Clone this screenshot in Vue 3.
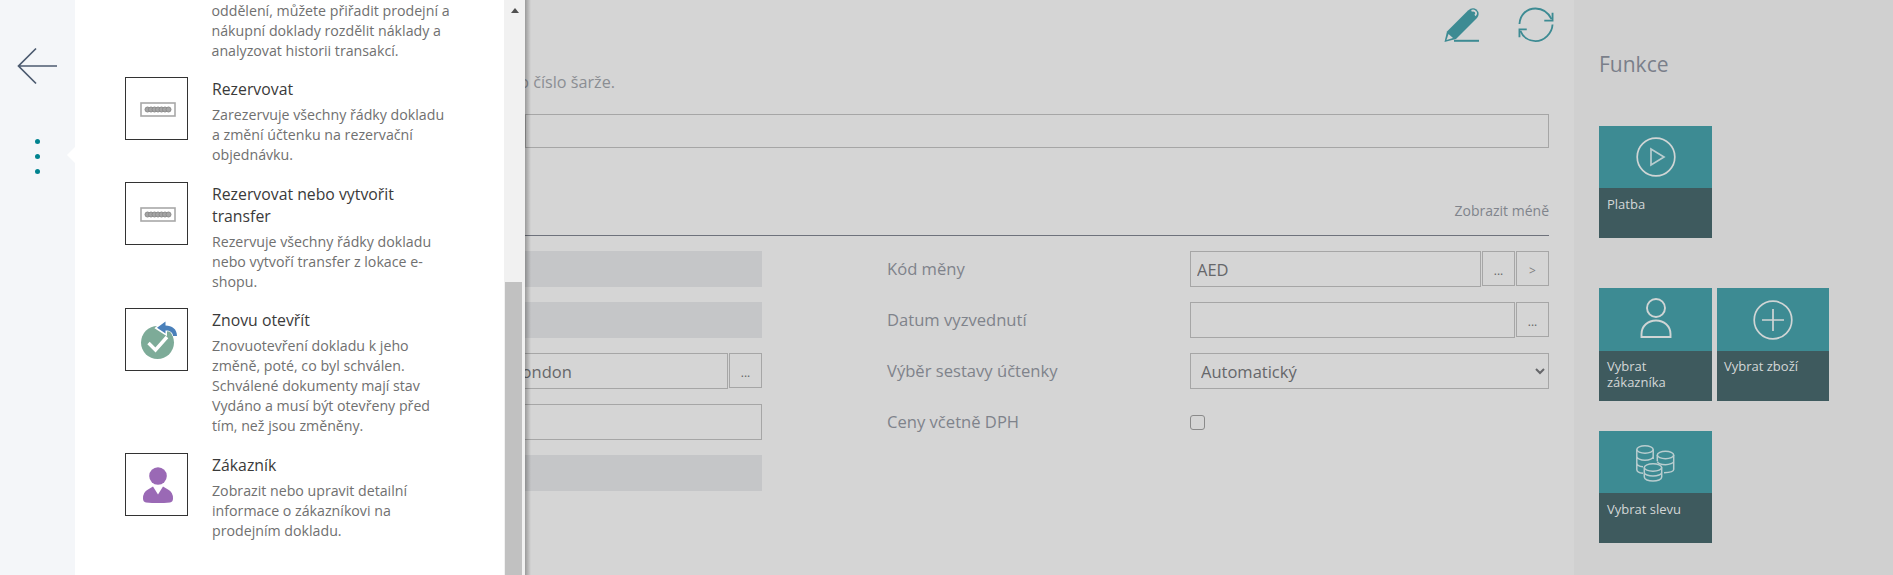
<script setup>
const lead = 'oddělení, můžete přiřadit prodejní a\nnákupní doklady rozdělit náklady a\nanalyzovat historii transakcí.'
const items = [
  { cls: 'i1', icon: 'box', title: 'Rezervovat', desc: 'Zarezervuje všechny řádky dokladu\na změní účtenku na rezervační\nobjednávku.' },
  { cls: 'i2', icon: 'box', title: 'Rezervovat nebo vytvořit\ntransfer', desc: 'Rezervuje všechny řádky dokladu\nnebo vytvoří transfer z lokace e-\nshopu.' },
  { cls: 'i3', icon: 'reopen', title: 'Znovu otevřít', desc: 'Znovuotevření dokladu k jeho\nzměně, poté, co byl schválen.\nSchválené dokumenty mají stav\nVydáno a musí být otevřeny před\ntím, než jsou změněny.' },
  { cls: 'i4', icon: 'customer', title: 'Zákazník', desc: 'Zobrazit nebo upravit detailní\ninformace o zákazníkovi na\nprodejním dokladu.' }
]
const dots = [7, 10.5, 14, 17.5, 21, 24.5, 28]
</script>

<template>
  <div class="page">
    <nav class="nav">
      <svg class="back" width="42" height="38" viewBox="0 0 42 38">
        <path d="M20 1.5 2.5 19 20 36.5M2.5 19H41" fill="none" stroke="#4c5b70" stroke-width="1.7" />
      </svg>
      <div class="dots"><i></i><i></i><i></i></div>
    </nav>

    <aside class="panel">
      <div class="list">
        <p class="desc lead">{{ lead }}</p>
        <div v-for="item in items" :key="item.title" class="item" :class="item.cls">
          <div class="ibox">
            <svg v-if="item.icon === 'box'" class="ic-box" width="36" height="15" viewBox="0 0 36 15">
              <rect x="1" y="1" width="34" height="13" fill="#fff" stroke="#a8a8a8" stroke-width="1.6" />
              <circle v-for="d in dots" :key="d" :cx="d + .5" cy="7.5" r="2.500" fill="#a4a4a4" stroke="#8c8c8c" stroke-width="1" />
            </svg>
            <svg v-else-if="item.icon === 'reopen'" class="ic-reopen" width="37" height="38" viewBox="0 0 37 38">
              <circle cx="16.5" cy="21.5" r="16.5" fill="#7dab98" />
              <path d="M7.5 22 14.5 29 26 16" fill="none" stroke="#fff" stroke-width="3.4" />
              <path d="M16 7 24.5 0v12.500Z" fill="#fff" stroke="#fff" stroke-width="3" />
              <path d="M22 7c8-1 13 1 13 8" fill="none" stroke="#fff" stroke-width="7" />
              <path d="M16 6.800 24.500 .5v4c6.500 0 11.500 3.500 11.500 10.500h-4c0-3.500-3-5.500-7.500-5.500v3Z" fill="#4a80ba" />
            </svg>
            <svg v-else class="ic-cust" width="30" height="36" viewBox="0 0 30 36">
              <circle cx="15" cy="9" r="8.800" fill="#9a69b5" />
              <path d="M3 35.500Q0 35 0 31.500 0 25 5 22.500L10 19.500 15 27.500 20 19.500 25 22.500Q30 25 30 31.500 30 35 27 35.500 15 36.500 3 35.500Z" fill="#9a69b5" />
            </svg>
          </div>
          <div class="itext">
            <h3 class="title">{{ item.title }}</h3>
            <p class="desc">{{ item.desc }}</p>
          </div>
        </div>
      </div>
      <div class="scroll">
        <span class="arrow"></span>
        <span class="thumb"></span>
      </div>
    </aside>

    <main class="main">
      <div class="toolbar">
        <svg width="36" height="36" viewBox="0 0 36 36">
          <path d="M.5 35 3 24.500 24 3.500Q28.500-.5 32.500 2.500 36.500 6.500 33 11L12 32Z" fill="#3d8b93" />
          <path d="M2.500 33 4.500 27 9 31Z" fill="#d5d5d5" />
          <path d="M27.500 3.800Q30 2.800 31.800 5 32.800 7 31 8.500" fill="none" stroke="#d5d5d5" stroke-width="1.800" />
          <path d="M10 33.800H35" stroke="#3d8b93" stroke-width="2" />
        </svg>
        <svg width="36" height="36" viewBox="0 0 37 37">
          <path d="M1.500 17.500C2 8 9 1.500 18 1.500 25 1.500 31 5.500 34.500 12.500M2.500 24.500C5 31 11 35 18 35 27 35 35 27 35.500 18" fill="none" stroke="#3d8b93" stroke-width="1.900" />
          <path d="M35.500 6V14H27M9 23H1.500V31" fill="none" stroke="#3d8b93" stroke-width="1.900" />
        </svg>
      </div>
      <div class="hint-row"><span class="hint">Zadejte sériové číslo nebo číslo šarže.</span></div>
      <input class="field scan" readonly value="" />
      <div class="section-head"><span>Zobrazit méně</span></div>
      <div class="form">
        <div class="col-left">
          <div class="ro"></div>
          <div class="ro"></div>
          <div class="with-btn">
            <input class="field grow clip-l" readonly value="London" />
            <button class="btn">...</button>
          </div>
          <input class="field clip" readonly value="" />
          <div class="ro"></div>
        </div>
        <div class="col-right">
          <label class="lbl">Kód měny</label>
          <div class="with-btn">
            <input class="field grow" readonly value="AED" />
            <button class="btn">...</button>
            <button class="btn gt">&gt;</button>
          </div>
          <label class="lbl">Datum vyzvednutí</label>
          <div class="with-btn">
            <input class="field grow" readonly value="" />
            <button class="btn">...</button>
          </div>
          <label class="lbl">Výběr sestavy účtenky</label>
          <select class="field sel"><option>Automatický</option></select>
          <label class="lbl">Ceny včetně DPH</label>
          <div class="chk"><input type="checkbox" /></div>
        </div>
      </div>
    </main>

    <aside class="side">
      <h2 class="side-title">Funkce</h2>
      <div class="tiles r1">
        <div class="tile">
          <div class="tile-top">
            <svg width="40" height="40" viewBox="0 0 40 40">
              <circle cx="20" cy="20" r="18.800" fill="none" stroke="#d0d5d5" stroke-width="1.700" />
              <path d="M15 12V28L28 20Z" fill="none" stroke="#b9cdcf" stroke-width="1.700" />
            </svg>
          </div>
          <div class="tile-label">Platba</div>
        </div>
      </div>
      <div class="tiles r2">
        <div class="tile">
          <div class="tile-top">
            <svg class="ic-person" width="32" height="41" viewBox="0 0 32 41">
              <circle cx="16" cy="10" r="9" fill="none" stroke="#d0d5d5" stroke-width="1.900" />
              <path d="M1.500 39V36C1.500 28 8 22.500 16 22.500S30.500 28 30.500 36V39Z" fill="none" stroke="#d0d5d5" stroke-width="1.900" />
            </svg>
          </div>
          <div class="tile-label">Vybrat zákazníka</div>
        </div>
        <div class="tile t2">
          <div class="tile-top">
            <svg width="40" height="40" viewBox="0 0 40 40">
              <circle cx="20" cy="20" r="18.800" fill="none" stroke="#d0d5d5" stroke-width="1.700" />
              <path d="M20 9V31M9 20H31" stroke="#d0d5d5" stroke-width="1.700" />
            </svg>
          </div>
          <div class="tile-label">Vybrat zboží</div>
        </div>
      </div>
      <div class="tiles r3">
        <div class="tile">
          <div class="tile-top">
            <svg class="ic-coins" width="39" height="37" viewBox="0 0 39 37" fill="none" stroke="#b9cdcf" stroke-width="1.500">
              <ellipse cx="9" cy="4.500" rx="8.200" ry="3.700" />
              <path d="M.8 4.500V24.500C.8 26.500 3.500 28 7 28.300M17.200 4.500V14M.8 11.500C.8 13.500 4.500 15.200 9 15.200S17.200 13.500 17.200 11.500M.8 18C.8 20 3.500 21.500 7 21.800" />
              <ellipse cx="29.500" cy="10" rx="8.200" ry="3.700" />
              <path d="M21.300 10V16M37.700 10V24.500C37.700 26.500 34.500 27.500 28 27.800M21.300 16.500C22 18.500 25.500 19.700 29.500 19.700S37.700 18 37.700 16.500" />
              <ellipse cx="17" cy="22.500" rx="8.700" ry="3.700" />
              <path d="M8.300 22.500V32C8.300 34.500 12.500 36 17 36S25.700 34.500 25.700 32V22.500M8.300 27.500C8.300 29.500 12.500 31 17 31S25.700 29.500 25.700 27.500" />
            </svg>
          </div>
          <div class="tile-label">Vybrat slevu</div>
        </div>
      </div>
    </aside>
  </div>
</template>

<style scoped>
.page {
  display: flex;
  width: 1893px;
  height: 575px;
  overflow: hidden;
  font-family: "Open Sans", "Noto Sans", sans-serif;
  background: #d5d5d5;
}
.nav {
  flex: 0 0 75px;
  background: #f4f6f9;
  padding: 47px 0 0 16px;
  box-sizing: border-box;
}
.back { display: block; }
.dots {
  display: flex;
  flex-direction: column;
  gap: 10px;
  margin: 54px 0 0 19px;
}
.dots i {
  width: 5px;
  height: 5px;
  border-radius: 50%;
  background: #00838f;
}
.panel {
  position: relative;
  z-index: 2;
  flex: 0 0 450px;
  display: flex;
  background: #fff;
}
.panel::before {
  content: "";
  position: absolute;
  left: -8px;
  top: 147px;
  border-style: solid;
  border-width: 8px 8px 8px 0;
  border-color: transparent #fff transparent transparent;
}
.panel::after {
  content: "";
  position: absolute;
  top: 0;
  bottom: 0;
  right: -6px;
  width: 6px;
  background: linear-gradient(to right, rgba(0, 0, 0, .28), rgba(0, 0, 0, 0));
}
.list {
  flex: 0 0 429px;
  padding-left: 50px;
  box-sizing: border-box;
  overflow: hidden;
}
.desc {
  margin: 0;
  font-size: 14.200px;
  line-height: 20px;
  color: #707070;
  white-space: pre-line;
}
.lead {
  padding: 1px 0 0 86.500px;
  height: 76px;
  white-space: pre;
}
.item { display: flex; gap: 24px; }
.i1 { height: 105px; }
.i2 { height: 126px; }
.i3 { height: 145px; }
.ibox {
  flex: 0 0 63px;
  height: 63px;
  box-sizing: border-box;
  border: 1px solid #333;
  display: flex;
  align-items: center;
  justify-content: center;
}
.ic-box { margin: 2px 0 0 3px; }
.ic-reopen { margin-left: 6px; }
.ic-cust { margin-left: 2px; }
.title {
  margin: 1px 0 5px;
  font-size: 15.800px;
  font-weight: 400;
  line-height: 22px;
  color: #3a3a3a;
  white-space: pre-line;
}
.scroll {
  flex: 0 0 21px;
  background: #f1f1f1;
  display: flex;
  flex-direction: column;
  align-items: center;
}
.arrow {
  margin-top: 8px;
  border-style: solid;
  border-width: 0 4.500px 5px;
  border-color: transparent transparent #505050;
}
.thumb {
  width: 17px;
  height: 293px;
  margin-top: 269px;
  margin-right: 2px;
  background: #c1c1c1;
}
.main {
  flex: 0 0 1049px;
  box-sizing: border-box;
  padding: 7px 25px 0 0;
  display: flex;
  flex-direction: column;
  overflow: hidden;
  color: #777b84;
}
.toolbar {
  display: flex;
  justify-content: flex-end;
  gap: 38px;
  height: 36px;
  margin-right: -5px;
}
.hint-row {
  width: 90px;
  height: 20px;
  margin-top: 29px;
  display: flex;
  justify-content: flex-end;
  white-space: nowrap;
}
.hint {
  font-size: 16.200px;
  line-height: 20px;
  color: #8b8e93;
}
.field {
  box-sizing: border-box;
  display: block;
  background: transparent;
  border: 1px solid #a6a6a6;
  border-radius: 0;
  font: 16.500px "Open Sans", "Noto Sans", sans-serif;
  color: #66676a;
  padding: 0 6px;
  outline: none;
  min-width: 0;
  height: 36px;
}
.scan {
  width: 100%;
  height: 34px;
  margin-top: 22px;
}
.section-head {
  box-sizing: border-box;
  height: 88px;
  padding-top: 54px;
  margin-bottom: 15px;
  border-bottom: 1px solid #6e727c;
  text-align: right;
  font-size: 14px;
  line-height: 18px;
  color: #80848c;
}
.form {
  display: flex;
  justify-content: space-between;
}
.col-left {
  flex: 0 0 237px;
  min-width: 0;
  display: flex;
  flex-direction: column;
  gap: 15px;
}
.ro {
  height: 36px;
  background: #c5c6c8;
}
.with-btn {
  display: flex;
  gap: 1px;
  height: 36px;
  overflow: hidden;
}
.grow { flex: 1 1 0; }
.clip-l { margin-left: -13px; padding-left: 0; }
.clip { width: 100%; border-left: 0; }
.btn {
  flex: 0 0 33px;
  height: 35px;
  box-sizing: border-box;
  padding: 4px 0 0;
  background: transparent;
  border: 1px solid #a6a6a6;
  border-radius: 0;
  font: 12px "Open Sans", "Noto Sans", sans-serif;
  color: #666;
}
.gt { color: #808080; }
.col-right {
  flex: 0 0 662px;
  display: grid;
  grid-template-columns: 303px 359px;
  grid-auto-rows: 36px;
  row-gap: 15px;
  align-content: start;
}
.lbl {
  font-size: 16.600px;
  line-height: 36px;
  color: #7f838b;
}
.sel { width: 100%; padding: 0 6px; }
.chk { display: flex; align-items: center; height: 36px; }
.chk input {
  appearance: none;
  box-sizing: border-box;
  width: 15px;
  height: 15px;
  margin: 0;
  background: transparent;
  border: 1px solid #8a8a8a;
  border-radius: 3px;
}
.side {
  flex: 0 0 319px;
  box-sizing: border-box;
  background: #d0d0d0;
  padding: 49px 0 0 25px;
}
.side-title {
  margin: 0;
  height: 30px;
  font-size: 21px;
  font-weight: 400;
  line-height: 30px;
  color: #7a7f8a;
}
.tiles { display: flex; gap: 5px; }
.r1 { margin-top: 47px; }
.r2 { margin-top: 50px; }
.r3 { margin-top: 30px; }
.tile {
  width: 113px;
  height: 112px;
  display: flex;
  flex-direction: column;
}
.r2 .tile { height: 113px; }
.t2 { width: 112px; }
.tile-top {
  flex: 1;
  background: #3d8b93;
  display: flex;
  align-items: center;
  justify-content: center;
}
.ic-person { margin-bottom: 3px; }
.ic-coins { margin-top: 2px; }
.tile-label {
  flex: 0 0 50px;
  box-sizing: border-box;
  background: #3e5a5e;
  padding: 8px 8px 0;
  font-size: 13px;
  font-weight: 400;
  line-height: 16px;
  color: #d3d7d7;
}
.r2 .tile-label { padding-top: 7px; }
.t2 .tile-label { padding-left: 7px; }
</style>
